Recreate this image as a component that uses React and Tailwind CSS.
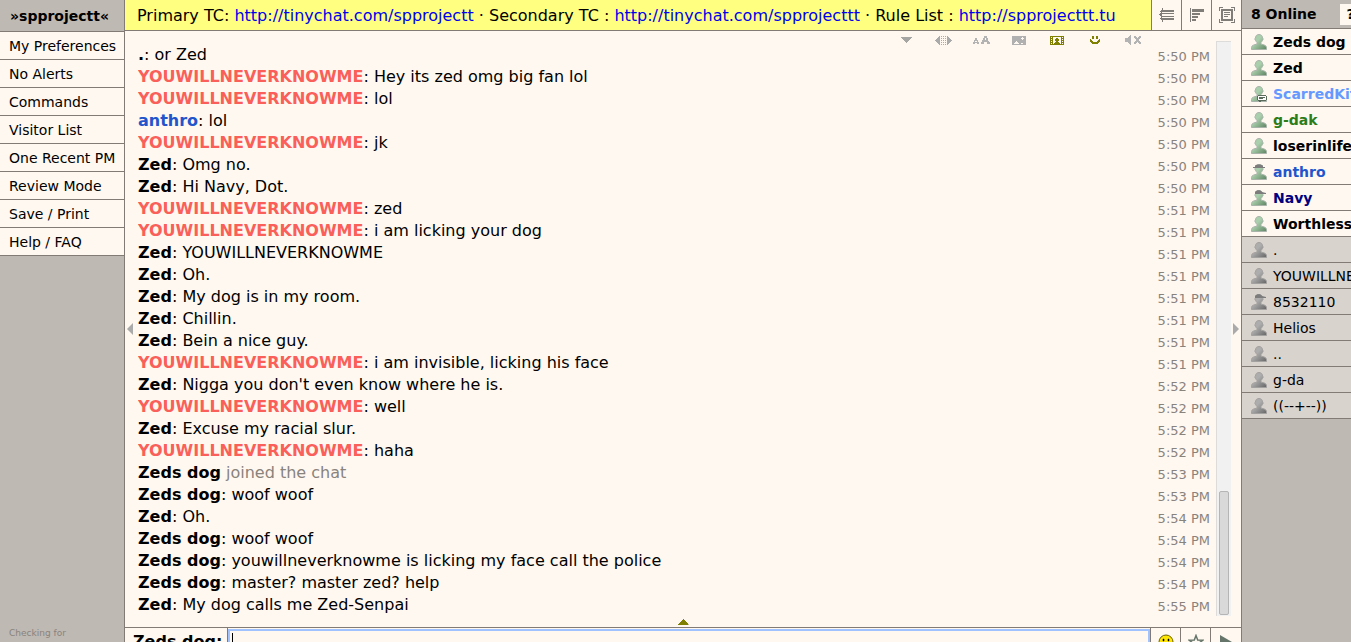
import { useState } from 'react';

const menuItems = [
  'My Preferences',
  'No Alerts',
  'Commands',
  'Visitor List',
  'One Recent PM',
  'Review Mode',
  'Save / Print',
  'Help / FAQ',
];

const nameColors = {
  YOUWILLNEVERKNOWME: 'text-[#fa5f5a]',
  anthro: 'text-[#2255cc]',
};

const messages = [
  { name: '.', text: 'or Zed', time: '5:50 PM' },
  { name: 'YOUWILLNEVERKNOWME', text: 'Hey its zed omg big fan lol', time: '5:50 PM' },
  { name: 'YOUWILLNEVERKNOWME', text: 'lol', time: '5:50 PM' },
  { name: 'anthro', text: 'lol', time: '5:50 PM' },
  { name: 'YOUWILLNEVERKNOWME', text: 'jk', time: '5:50 PM' },
  { name: 'Zed', text: 'Omg no.', time: '5:50 PM' },
  { name: 'Zed', text: 'Hi Navy, Dot.', time: '5:50 PM' },
  { name: 'YOUWILLNEVERKNOWME', text: 'zed', time: '5:51 PM' },
  { name: 'YOUWILLNEVERKNOWME', text: 'i am licking your dog', time: '5:51 PM' },
  { name: 'Zed', text: 'YOUWILLNEVERKNOWME', time: '5:51 PM' },
  { name: 'Zed', text: 'Oh.', time: '5:51 PM' },
  { name: 'Zed', text: 'My dog is in my room.', time: '5:51 PM' },
  { name: 'Zed', text: 'Chillin.', time: '5:51 PM' },
  { name: 'Zed', text: 'Bein a nice guy.', time: '5:51 PM' },
  { name: 'YOUWILLNEVERKNOWME', text: 'i am invisible, licking his face', time: '5:51 PM' },
  { name: 'Zed', text: "Nigga you don't even know where he is.", time: '5:52 PM' },
  { name: 'YOUWILLNEVERKNOWME', text: 'well', time: '5:52 PM' },
  { name: 'Zed', text: 'Excuse my racial slur.', time: '5:52 PM' },
  { name: 'YOUWILLNEVERKNOWME', text: 'haha', time: '5:52 PM' },
  { name: 'Zeds dog', event: 'joined the chat', time: '5:53 PM' },
  { name: 'Zeds dog', text: 'woof woof', time: '5:53 PM' },
  { name: 'Zed', text: 'Oh.', time: '5:54 PM' },
  { name: 'Zeds dog', text: 'woof woof', time: '5:54 PM' },
  { name: 'Zeds dog', text: 'youwillneverknowme is licking my face call the police', time: '5:54 PM' },
  { name: 'Zeds dog', text: 'master? master zed? help', time: '5:54 PM' },
  { name: 'Zed', text: 'My dog calls me Zed-Senpai', time: '5:55 PM' },
];

const users = [
  { name: 'Zeds dog', online: true, color: 'text-black' },
  { name: 'Zed', online: true, color: 'text-black' },
  { name: 'ScarredKitty', online: true, color: 'text-[#6699ff]', badge: 'note' },
  { name: 'g-dak', online: true, color: 'text-[#2a7d1a]' },
  { name: 'loserinlife', online: true, color: 'text-black' },
  { name: 'anthro', online: true, color: 'text-[#2255cc]', badge: 'hat' },
  { name: 'Navy', online: true, color: 'text-[#000080]', badge: 'cap' },
  { name: 'Worthless', online: true, color: 'text-black' },
  { name: '.' },
  { name: 'YOUWILLNEVERKNOWME' },
  { name: '8532110', badge: 'cap' },
  { name: 'Helios' },
  { name: '..' },
  { name: 'g-da' },
  { name: '((--+--))' },
];

function Person({ online, badge }) {
  const id = `person-${online ? 'on' : 'off'}-${badge || 'plain'}`;
  return (
    <svg width="16" height="16" viewBox="0 0 16 16" className="shrink-0" aria-hidden="true">
      <defs>
        <linearGradient id={id} x1="0" y1="0" x2="1" y2="1">
          <stop offset="0.4" stopColor={online ? '#a9cfac' : '#adadad'} />
          <stop offset="1" stopColor={online ? '#5f8463' : '#666'} />
        </linearGradient>
      </defs>
      <path
        d="M8 .5c2.400 0 3.500 1.500 3.500 3.500 1 .3.9 1.800 0 2.200-.3 1-1 1.800-1.500 2.300v1.700c2.500.4 5.500 1.100 5.500 3.300v2H.5v-2c0-2.200 3-2.900 5.500-3.300V8.500C5.500 8 4.800 7.200 4.500 6.200c-.9-.4-1-1.900 0-2.200C4.500 2 5.600.5 8 .5z"
        fill={`url(#${id})`}
        stroke={online ? '#a9b3a9' : '#a3a19f'}
        strokeWidth="1"
      />
      {badge === 'hat' && <path d="M4 3V1.500C5 0 11 0 12 1.500V3h2v1H2V3z" fill="#7c7c7c" />}
      {badge === 'cap' && <path d="M4 4V2C5-.3 10-.3 11 2l4 1v1z" fill="#7c7c7c" />}
      {badge === 'note' && (
        <g shapeRendering="crispEdges">
          <path d="M7 9h8v1h1v4h-1v1h-5v1H8v-1H7v-1H6v-4h1z" fill="#5a6b5c" />
          <path d="M7 10h8v4H7z" fill="#fff" />
          <path d="M8 11h6v1H8zM8 13h4v-1H8z" fill="#5a6b5c" />
        </g>
      )}
    </svg>
  );
}

const tools = [
  {
    label: 'Hide toolbar',
    icon: <path d="M4 5h11v1h-1v1h-1v1h-1v1h-1v1h-1v1H9v-1H8V9H7V8H6V7H5V6H4z" fill="#a5a5a3" />,
  },
  {
    label: 'Width',
    icon: (
      <path
        d="M0 8h1V7h1V6h1V5h1V4h1v9H4v-1H3v-1H2v-1H1V9H0zM12 4h1v1h1v1h1v1h1v1h1v1h-1v1h-1v1h-1v1h-1v1h-1zM6 4h1v1H6zM6 6h1v1H6zM6 8h1v1H6zM6 10h1v1H6zM6 12h1v1H6zM8 4h1v1H8zM8 6h1v1H8zM8 8h1v1H8zM8 10h1v1H8zM8 12h1v1H8zM10 4h1v1h-1zM10 6h1v1h-1zM10 8h1v1h-1zM10 10h1v1h-1zM10 12h1v1h-1z"
        fill="#aaa"
      />
    ),
  },
  {
    label: 'Text size',
    icon: (
      <path
        d="M2 6h2v2h1v2h1v2H4v-1H2v1H0v-2h1V8h1zM2 9v1h2V9zM11 4h3v2h1v3h1v1h1v2h-3v-2h-3v2H8v-2h1V8h1V6h1zM12 6v2h1V6z"
        fill="#b3b3b3"
        fillRule="evenodd"
      />
    ),
  },
  {
    label: 'Images',
    icon: (
      <g>
        <path d="M1 4h14v9H1z" fill="#b0b0b0" />
        <path d="M3 12v-1h1v-1h1V9h1v1h1v1h1v1zM10 12v-1h2v1zM11 5h1v1h1v1h-1v1h-1V7h-1V6h1z" fill="#fff8f0" />
      </g>
    ),
  },
  {
    label: 'Videos',
    icon: (
      <g>
        <path d="M1 4h14v9H1z" fill="#808000" />
        <path d="M2 5h1v1H2zM2 7h1v1H2zM2 9h1v1H2zM2 11h1v1H2zM13 5h1v1h-1zM13 7h1v1h-1zM13 9h1v1h-1zM13 11h1v1h-1zM4 5h8v7H4z" fill="#fff8f0" />
        <path d="M7 6h2v1h1v2H9v1h1v1h1v1H5v-1h1v-1h1V9H6V7h1z" fill="#808000" />
      </g>
    ),
  },
  {
    label: 'Smilies',
    icon: <path d="M5 4h2v3H5zM9 4h2v3H9zM3 7h1v1h1v1h1v1h4V9h1V8h1V7h1v3h-1v1h-1v1H5v-1H4v-1H3z" fill="#808000" />,
  },
  {
    label: 'Sound',
    icon: <path d="M0 6h3V5h1V4h1V3h1v10H5v-1H4v-1H3v-1H0zM9 4h2v1h1v1h1V5h1V4h2v2h-1v1h-1v2h1v1h1v2h-2v-1h-1v-1h-1v1h-1v1H9v-2h1V9h1V7h-1V6H9z" fill="#b3b3b3" />,
  },
];

function Sidebar() {
  return (
    <nav className="flex w-[125px] shrink-0 flex-col border-r border-[#827b75] bg-[#bfb9b3]">
      <h1 className="h-8 border-b border-[#827b75] pl-[10px] text-sm leading-8 font-bold">»spprojectt«</h1>
      {menuItems.map((item) => (
        <button
          key={item}
          type="button"
          className="h-7 border-b border-[#827b75] bg-[#fff8f0] pl-[9px] text-left text-sm leading-7 whitespace-nowrap hover:bg-white"
        >
          {item}
        </button>
      ))}
      <p className="mt-auto pb-[3px] pl-[9px] text-[9px] leading-3 text-[#89837d]">Checking for</p>
    </nav>
  );
}

function TopBar() {
  return (
    <header className="flex h-[31px] shrink-0 border-b border-[#827b75]">
      <p className="min-w-0 flex-1 overflow-hidden bg-[#ffff80] pl-3 leading-[31px] whitespace-nowrap">
        Primary TC: <a href="#tc1" className="text-[#0000ee]">http://tinychat.com/spprojectt</a> · Secondary TC :{' '}
        <a href="#tc2" className="text-[#0000ee]">http://tinychat.com/spprojecttt</a> · Rule List :{' '}
        <a href="#rules" className="text-[#0000ee]">http://spprojecttt.tu</a>
      </p>
      <button type="button" aria-label="Indent" className="flex w-[30px] items-center justify-center border-l border-[#827b75]">
        <svg width="16" height="14" viewBox="0 0 16 14" fill="#807c78" shapeRendering="crispEdges" aria-hidden="true">
          <path d="M3 0h1v2h11v2H3v1h12v1H3v2h12v1H3v1h12v2H4v2H3v-2H2v-1H1v-1h1V8H1V7H0V6h1V5h1V4H1V3h1V2h1z" />
        </svg>
      </button>
      <button type="button" aria-label="Align" className="flex w-[30px] items-center justify-center border-l border-[#827b75]">
        <svg width="14" height="14" viewBox="0 0 14 14" fill="#807c78" shapeRendering="crispEdges" aria-hidden="true">
          <path d="M0 0h1v14H0zM2 1h12v3H2zM2 5h8v2H2zM2 8h6v2H2zM2 11h4v2H2z" />
        </svg>
      </button>
      <button type="button" aria-label="Full screen" className="flex w-[30px] items-center justify-center border-l border-[#827b75]">
        <svg width="16" height="16" viewBox="0 0 16 16" fill="#807c78" shapeRendering="crispEdges" aria-hidden="true">
          <path d="M0 0h4v1H1v3H0zM12 0h4v4h-1V1h-3zM0 12h1v3h3v1H0zM15 12h1v4h-4v-1h3z" />
          <path d="M2 2h12v12H2zM4 4v8h8V4z" fillRule="evenodd" />
          <path d="M5 5h6v1H5zM5 7h6v1H5zM5 9h4v1H5z" />
        </svg>
      </button>
    </header>
  );
}

function ChatLog() {
  return (
    <section className="relative flex min-h-0 flex-1">
      <button type="button" aria-label="Collapse menu" className="flex w-[13px] shrink-0 items-center pl-[2px]">
        <svg width="6" height="12" viewBox="0 0 6 12" fill="#aaa" aria-hidden="true">
          <path d="M6 0v12L0 6z" />
        </svg>
      </button>
      <ol className="min-w-0 flex-1 overflow-hidden pt-[13px]">
        {messages.map((message, i) => (
          <li key={i} className="flex h-[22px] justify-between leading-[22px] whitespace-nowrap">
            <p>
              <b className={nameColors[message.name]}>{message.name}</b>
              {message.event ? <span className="text-[#89837d]"> {message.event}</span> : <>: {message.text}</>}
            </p>
            <time className="pt-[2px] text-[13px] text-[#89837d]">{message.time}</time>
          </li>
        ))}
      </ol>
      <div className="mt-[10px] mr-[2px] mb-[11px] ml-[6px] flex w-[15px] shrink-0 flex-col justify-end border-t border-l border-[#dddcda] bg-[#f1f1f1] px-[2px] pb-px">
        <div className="h-[124px] rounded-xs border border-[#b5b5b5] bg-[#d9d9d9]" />
      </div>
      <button type="button" aria-label="Collapse user list" className="flex w-2 shrink-0 items-center">
        <svg width="6" height="12" viewBox="0 0 6 12" fill="#aaa" aria-hidden="true">
          <path d="M0 0v12l6-6z" />
        </svg>
      </button>
      <div className="absolute top-0 right-[89px] flex">
        {tools.map((tool) => (
          <button key={tool.label} type="button" aria-label={tool.label} className="flex h-[18px] w-[38px] items-center justify-center">
            <svg width="17" height="16" viewBox="0 0 17 16" shapeRendering="crispEdges" aria-hidden="true">
              {tool.icon}
            </svg>
          </button>
        ))}
      </div>
      <button type="button" aria-label="Expand editor" className="absolute bottom-[2px] left-1/2 -translate-x-1/2">
        <svg width="11" height="6" viewBox="0 0 11 6" fill="#808000" shapeRendering="crispEdges" aria-hidden="true">
          <path d="M5 0h1v1h1v1h1v1h1v1h1v1h1v1H0V5h1V4h1V3h1V2h1V1h1z" />
        </svg>
      </button>
    </section>
  );
}

function Composer() {
  const [draft, setDraft] = useState('');
  return (
    <form className="-mb-[14px] flex h-[29px] shrink-0 border-t border-[#827b75]" onSubmit={(e) => e.preventDefault()}>
      <label htmlFor="draft" className="w-[103px] shrink-0 border-r border-[#827b75] pl-2 leading-7 font-bold whitespace-nowrap">
        Zeds dog:
      </label>
      <div className="relative mt-px flex min-w-0 flex-1">
        <input
          id="draft"
          autoComplete="off"
          value={draft}
          onChange={(e) => setDraft(e.target.value)}
          className="peer min-w-0 flex-1 border-2 border-[#a0c3ff] bg-[#fff8f0] px-[3px] outline-none"
        />
        {/* resting caret, gives way to the real one on focus */}
        <span className="pointer-events-none absolute inset-y-1 left-1 w-px bg-black peer-focus:hidden" />
      </div>
      <button type="button" aria-label="Insert smiley" className="flex w-[30px] shrink-0 items-center justify-center border-l border-[#827b75]">
        <svg width="16" height="16" viewBox="0 0 16 16" aria-hidden="true">
          <circle cx="8" cy="8" r="7" fill="#ffe600" stroke="#6b6000" />
          <path d="M5 5h1v2H5zM10 5h1v2h-1z" fill="#000" stroke="#000" strokeWidth=".5" />
          <path d="M4 10c2 3 6 3 8 0" fill="none" stroke="#000" />
        </svg>
      </button>
      <button type="button" aria-label="Favorites" className="flex w-[30px] shrink-0 items-center justify-center border-l border-[#827b75]">
        <svg width="16" height="16" viewBox="0 0 16 16" fill="none" stroke="#66756a" strokeWidth="1.500" aria-hidden="true">
          <path d="M8 1.500l1.700 4.600 5 .2-4 3 1.500 4.800L8 11.300l-4.200 2.800 1.500-4.800-4-3 5-.2z" />
        </svg>
      </button>
      <button type="submit" aria-label="Send" className="flex w-[31px] shrink-0 items-center justify-center border-l border-[#827b75]">
        <svg width="12" height="14" viewBox="0 0 12 14" fill="#66756a" aria-hidden="true">
          <path d="M0 0l12 7-12 7z" />
        </svg>
      </button>
    </form>
  );
}

function UserList() {
  return (
    <aside className="w-[110px] shrink-0 overflow-hidden border-l border-[#827b75] bg-[#bfb9b3] text-sm">
      <div className="flex h-[29px] items-center border-b border-[#827b75] pl-[9px]">
        <h2 className="w-[89px] shrink-0 font-bold">8 Online</h2>
        <button type="button" className="h-[21px] w-[21px] shrink-0 bg-[#fff8f0] font-bold">
          ?
        </button>
      </div>
      <ul>
        {users.map((user) => (
          <li
            key={user.name}
            className={`flex h-[26px] items-center gap-[6px] border-b border-[#827b75] pl-[9px] whitespace-nowrap ${
              user.online ? `bg-[#fff8f0] font-bold ${user.color}` : 'bg-[#d8d3cd]'
            }`}
          >
            <Person online={user.online} badge={user.badge} />
            {user.name}
          </li>
        ))}
      </ul>
    </aside>
  );
}

function App() {
  return (
    <div className="flex h-screen overflow-clip bg-[#fff8f0] font-['DejaVu_Sans',sans-serif] text-base text-black">
      <Sidebar />
      <main className="flex min-w-0 flex-1 flex-col overflow-clip">
        <TopBar />
        <ChatLog />
        <Composer />
      </main>
      <UserList />
    </div>
  );
}

export default App;
